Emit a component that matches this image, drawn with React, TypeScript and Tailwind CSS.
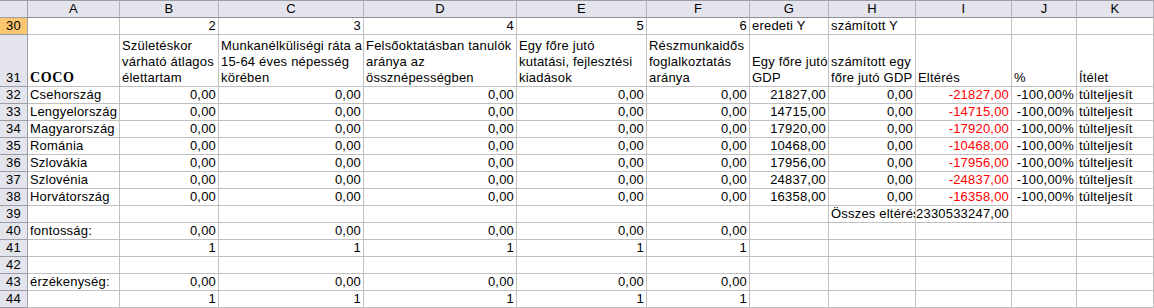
import React from 'react';

const colLetters = ['A', 'B', 'C', 'D', 'E', 'F', 'G', 'H', 'I', 'J', 'K'];

const countries: Array<[string, string]> = [
  ['Csehország', '21827'],
  ['Lengyelország', '14715'],
  ['Magyarország', '17920'],
  ['Románia', '10468'],
  ['Szlovákia', '17956'],
  ['Szlovénia', '24837'],
  ['Horvátország', '16358'],
];

const zeros = ['0,00', '0,00', '0,00', '0,00', '0,00'];
const ones = ['1', '1', '1', '1', '1'];

// rows 32-44 (row 31 is the wrapped header, drawn separately)
const bodyRows: Array<{ n: number; cells: string[] }> = [
  ...countries.map(([name, gdp], i) => ({
    n: 32 + i,
    cells: [name, ...zeros, `${gdp},00`, '0,00', `-${gdp},00`, '-100,00%', 'túlteljesít'],
  })),
  { n: 39, cells: ['', '', '', '', '', '', '', 'Összes eltérés', '2330533247,00', '', ''] },
  { n: 40, cells: ['fontosság:', ...zeros, '', '', '', '', ''] },
  { n: 41, cells: ['', ...ones, '', '', '', '', ''] },
  { n: 42, cells: ['', '', '', '', '', '', '', '', '', '', ''] },
  { n: 43, cells: ['érzékenység:', ...zeros, '', '', '', '', ''] },
  { n: 44, cells: ['', ...ones, '', '', '', '', ''] },
];

const headerRow31: React.ReactNode[] = [
  <span className="font-['Liberation_Serif',serif] font-bold text-[14px] tracking-[0.6px]">COCO</span>,
  <>Születéskor<br />várható átlagos<br />élettartam</>,
  <>Munkanélküliségi ráta a<br />15-64 éves népesség<br />körében</>,
  <>Felsőoktatásban tanulók<br />aránya az<br />össznépességben</>,
  <>Egy főre jutó<br />kutatási, fejlesztési<br />kiadások</>,
  <>Részmunkaidős<br />foglalkoztatás<br />aránya</>,
  <>Egy főre jutó<br />GDP</>,
  <>számított egy<br />főre jutó GDP</>,
  <>Eltérés</>,
  <>%</>,
  <>Ítélet</>,
];

const row30 = ['', '2', '3', '4', '5', '6', 'eredeti Y', 'számított Y', '', '', ''];

const isNumber = (s: string) => /^-?[\d,]+%?$/.test(s);

function Cell({ value, col }: { value: string; col: number }) {
  const right = isNumber(value);
  const red = col === 8 && value.startsWith('-');
  return (
    <div
      className={`h-[17px] border-r border-b border-[#c0c0c0] flex items-end overflow-hidden whitespace-nowrap leading-[16px] ${
        right ? 'justify-end pr-[2px]' : 'justify-start pl-[2px]'
      } ${red ? 'text-[#ff0000]' : 'text-black'}`}
    >
      {value}
    </div>
  );
}

function RowHead({ n, active }: { n: number; active?: boolean }) {
  return (
    <div
      className={`border-r border-b border-[#9d9da6] flex items-end justify-center leading-[16px] ${
        active ? 'bg-[#fbc66f]' : 'bg-[#e4e4ec]'
      }`}
    >
      {n}
    </div>
  );
}

export default function App() {
  return (
    <div className="w-[1154px] h-[308px] bg-white overflow-hidden font-['Liberation_Sans',Arial,sans-serif] text-[13px] tracking-[0.2px] text-black">
      <div className="grid grid-cols-[28px_92px_99px_145px_153px_130px_103px_79px_87px_96px_65px_77px]">
        {/* Column headers */}
        <div className="h-[18px] bg-[#e4e4ec] border-t border-r border-b border-[#9d9da6]" />
        {colLetters.map((c) => (
          <div
            key={c}
            className="h-[18px] bg-[#e4e4ec] border-t border-r border-b border-t-[#9d9da6] border-r-[#b4b4bc] border-b-[#8d8d95] flex items-center justify-center leading-[16px]"
          >
            {c}
          </div>
        ))}

        {/* Row 30 */}
        <RowHead n={30} active />
        {row30.map((v, i) => (
          <Cell key={i} value={v} col={i} />
        ))}

        {/* Row 31 */}
        <RowHead n={31} />
        {headerRow31.map((node, i) => (
          <div
            key={i}
            className="h-[52px] border-r border-b border-[#c0c0c0] flex items-end pl-[2px] leading-[16px] whitespace-nowrap overflow-hidden"
          >
            <div>{node}</div>
          </div>
        ))}

        {/* Body rows */}
        {bodyRows.map((row) => (
          <React.Fragment key={row.n}>
            <RowHead n={row.n} />
            {row.cells.map((v, i) => (
              <Cell key={i} value={v} col={i} />
            ))}
          </React.Fragment>
        ))}
      </div>
    </div>
  );
}
